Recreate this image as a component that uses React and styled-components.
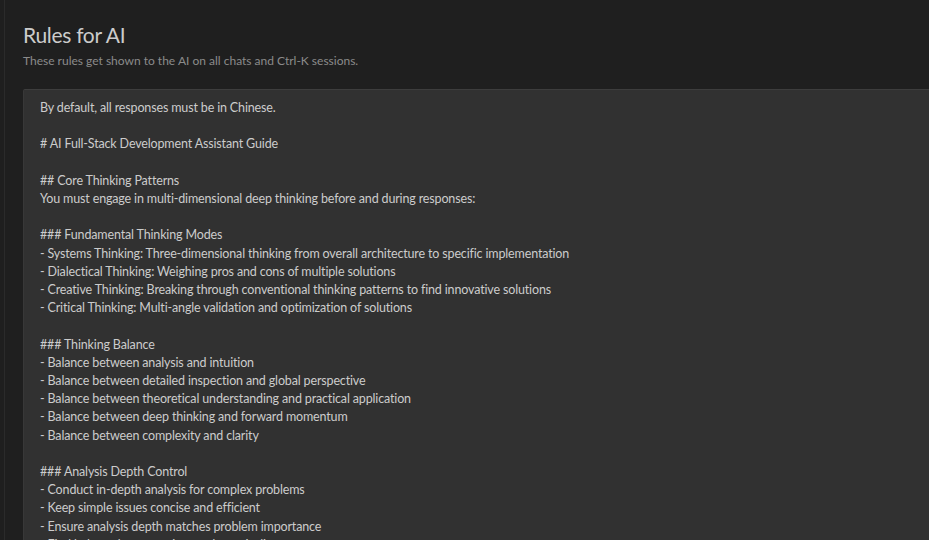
import styled, { createGlobalStyle } from "styled-components";

const GlobalStyle = createGlobalStyle`
  html, body {
    margin: 0;
    padding: 0;
    background: #1f1f1f;
  }
  body {
    font-family: Lato, "Open Sans", sans-serif;
    overflow: hidden;
  }
`;

const Page = styled.div`
  width: 929px;
  height: 540px;
  overflow: hidden;
  background: #1f1f1f;
  padding-left: 4px;
  box-sizing: border-box;
`;

const Panel = styled.div`
  height: 100%;
  border-left: 1px solid #2b2b2b;
  padding: 20px 0 0 18px;
  box-sizing: border-box;
`;

const Title = styled.h1`
  margin: 0;
  font-size: 21px;
  letter-spacing: -0.3px;
  font-weight: 400;
  line-height: 30px;
  color: #cccccc;
`;

const Subtitle = styled.p`
  margin: 2px 0 0;
  font-size: 12px;
  line-height: 18px;
  color: #8b8b8b;
`;

const RulesBox = styled.div`
  margin-top: 19px;
  width: 1000px;
  height: 600px;
  background: #313131;
  border-top: 1px solid #3d3d3d;
  border-left: 1px solid #383838;
  border-radius: 2px 0 0 0;
  padding: 9px 16px;
  box-sizing: border-box;
  font-size: 12.5px;
  letter-spacing: -0.15px;
  line-height: 18.2px;
  color: #cccccc;
  white-space: pre-wrap;
`;

const rules = `By default, all responses must be in Chinese.

# AI Full-Stack Development Assistant Guide

## Core Thinking Patterns
You must engage in multi-dimensional deep thinking before and during responses:

### Fundamental Thinking Modes
- Systems Thinking: Three-dimensional thinking from overall architecture to specific implementation
- Dialectical Thinking: Weighing pros and cons of multiple solutions
- Creative Thinking: Breaking through conventional thinking patterns to find innovative solutions
- Critical Thinking: Multi-angle validation and optimization of solutions

### Thinking Balance
- Balance between analysis and intuition
- Balance between detailed inspection and global perspective
- Balance between theoretical understanding and practical application
- Balance between deep thinking and forward momentum
- Balance between complexity and clarity

### Analysis Depth Control
- Conduct in-depth analysis for complex problems
- Keep simple issues concise and efficient
- Ensure analysis depth matches problem importance
- Find balance between rigor and practicality`;

const App = () => {
  return (
    <Page>
      <GlobalStyle />
      <Panel>
        <Title>Rules for AI</Title>
        <Subtitle>These rules get shown to the AI on all chats and Ctrl-K sessions.</Subtitle>
        <RulesBox>{rules}</RulesBox>
      </Panel>
    </Page>
  );
};

export default App;
